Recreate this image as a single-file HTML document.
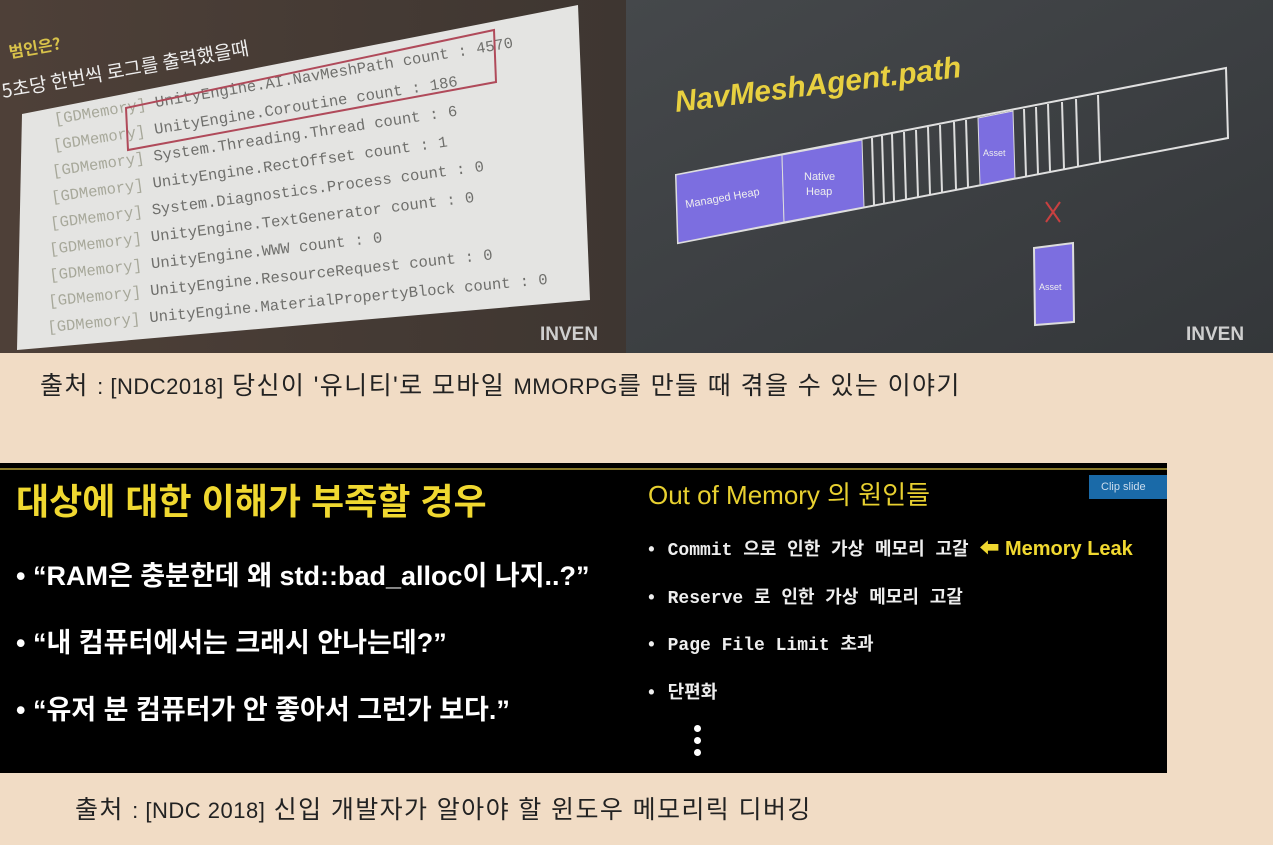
<!DOCTYPE html>
<html><head><meta charset="utf-8"><style>
body{margin:0;width:1273px;height:845px;background:#f1dcc5;position:relative;overflow:hidden;font-family:"Liberation Sans","Noto Sans CJK KR",sans-serif}
.cap{position:absolute;font-size:25px;color:#222;white-space:nowrap;letter-spacing:1.4px}
.cap .l{font-weight:300;font-size:22px;letter-spacing:0.5px}
</style></head><body>
<svg style="position:absolute;left:0;top:0" width="626" height="353">
<defs><linearGradient id="g1" x1="0" x2="1"><stop offset="0" stop-color="#4e4038"/><stop offset="1" stop-color="#3e3631"/></linearGradient></defs>
<rect width="626" height="353" fill="url(#g1)"/>
<polygon points="22,114 578,5 590,300 17,350" fill="#e4e4e2"/>
<text x="10" y="58" transform="rotate(-10 10 58)" font-family="Noto Sans CJK KR,sans-serif" font-size="16" fill="#d8c24a" font-weight="bold">범인은?</text>
<text x="3" y="98" transform="rotate(-10 3 98)" font-family="Noto Sans CJK KR,sans-serif" font-size="19" fill="#eee">5초당 한번씩 로그를 출력했을때</text>
<g font-family="Liberation Mono,monospace" font-size="15.5" fill="#6f6f6c">
<text x="55" y="124" transform="rotate(-9.5 55 124)"><tspan fill="#a7a89a">[GDMemory]</tspan> UnityEngine.AI.NavMeshPath count : 4570</text>
<text x="54" y="150" transform="rotate(-9 54 150)"><tspan fill="#a7a89a">[GDMemory]</tspan> UnityEngine.Coroutine count : 186</text>
<text x="53" y="176" transform="rotate(-8.5 53 176)"><tspan fill="#a7a89a">[GDMemory]</tspan> System.Threading.Thread count : 6</text>
<text x="52" y="202" transform="rotate(-8 52 202)"><tspan fill="#a7a89a">[GDMemory]</tspan> UnityEngine.RectOffset count : 1</text>
<text x="51" y="228" transform="rotate(-7.5 51 228)"><tspan fill="#a7a89a">[GDMemory]</tspan> System.Diagnostics.Process count : 0</text>
<text x="50" y="254" transform="rotate(-7 50 254)"><tspan fill="#a7a89a">[GDMemory]</tspan> UnityEngine.TextGenerator count : 0</text>
<text x="50" y="280" transform="rotate(-6.5 50 280)"><tspan fill="#a7a89a">[GDMemory]</tspan> UnityEngine.WWW count : 0</text>
<text x="49" y="306" transform="rotate(-6 49 306)"><tspan fill="#a7a89a">[GDMemory]</tspan> UnityEngine.ResourceRequest count : 0</text>
<text x="48" y="332" transform="rotate(-5.5 48 332)"><tspan fill="#a7a89a">[GDMemory]</tspan> UnityEngine.MaterialPropertyBlock count : 0</text>
</g>
<polygon points="126,108 494,30 496,82 128,150" fill="none" stroke="#b04a5a" stroke-width="2"/>
<text x="540" y="340" font-family="Liberation Sans,sans-serif" font-weight="bold" font-size="19" fill="#cfcfcf">INVEN</text>
</svg>
<svg style="position:absolute;left:626px;top:0" width="647" height="353">
<defs><linearGradient id="g2" x1="0" y1="0" x2="1" y2="1"><stop offset="0" stop-color="#45484b"/><stop offset="1" stop-color="#34373a"/></linearGradient></defs>
<rect width="647" height="353" fill="url(#g2)"/>
<text x="50" y="112" transform="rotate(-7 50 112)" font-family="Liberation Sans,sans-serif" font-style="italic" font-weight="bold" font-size="30" fill="#e8d040">NavMeshAgent.path</text>
<polygon points="50,175 600,68 602,138 52,243" fill="none" stroke="#e0e0e0" stroke-width="2"/>
<polygon points="50,175 156,155 158,222 52,243" fill="#7c6ee0" stroke="#ddd"/>
<polygon points="156,155 236,140 238,207 158,222" fill="#7c6ee0" stroke="#ddd"/>
<polygon points="352,118 387,111 389,178 354,185" fill="#7c6ee0" stroke="#ddd"/>
<g stroke="#ddd" stroke-width="2">
<line x1="246" y1="138" x2="248" y2="205"/><line x1="256" y1="136" x2="258" y2="203"/><line x1="266" y1="134" x2="268" y2="201"/><line x1="278" y1="132" x2="280" y2="199"/><line x1="290" y1="130" x2="292" y2="197"/><line x1="302" y1="127" x2="304" y2="194"/><line x1="314" y1="125" x2="316" y2="192"/><line x1="328" y1="122" x2="330" y2="189"/><line x1="340" y1="120" x2="342" y2="187"/>
<line x1="398" y1="109" x2="400" y2="176"/><line x1="410" y1="107" x2="412" y2="174"/><line x1="422" y1="104" x2="424" y2="171"/><line x1="436" y1="102" x2="438" y2="169"/><line x1="450" y1="99" x2="452" y2="166"/><line x1="472" y1="95" x2="474" y2="162"/>
</g>
<g stroke="#c84040" stroke-width="2"><line x1="420" y1="202" x2="434" y2="222"/><line x1="434" y1="202" x2="420" y2="222"/></g>
<polygon points="408,248 447,243 448,322 409,325" fill="#7c6ee0" stroke="#ddd" stroke-width="2"/>
<g font-size="11" fill="#eee" font-family="Liberation Sans,sans-serif"><text x="60" y="208" transform="rotate(-10 60 208)">Managed Heap</text><text x="178" y="180">Native</text><text x="180" y="195">Heap</text><text x="357" y="156" font-size="9">Asset</text><text x="413" y="290" font-size="9">Asset</text></g>
<text x="560" y="340" font-family="Liberation Sans,sans-serif" font-weight="bold" font-size="19" fill="#cfcfcf">INVEN</text>
</svg>
<div class="cap" style="left:40px;top:366px">출처 <span class="l">: [NDC2018]</span> 당신이 '유니티'로 모바일 <span class="l">MMORPG</span>를 만들 때 겪을 수 있는 이야기</div>
<div style="position:absolute;left:0;top:463px;width:1167px;height:310px;background:#000">
<div style="position:absolute;left:0;top:5px;width:1167px;height:2px;background:#8a7a2a"></div>
<div style="position:absolute;left:16px;top:10px;font-size:36px;font-weight:bold;color:#f0d830;letter-spacing:0">대상에 대한 이해가 부족할 경우</div>
<div style="position:absolute;left:16px;top:80px;font-size:27px;color:#fff;line-height:67px;font-weight:bold">• “RAM은 충분한데 왜 std::bad_alloc이 나지..?”<br>• “내 컴퓨터에서는 크래시 안나는데?”<br>• “유저 분 컴퓨터가 안 좋아서 그런가 보다.”</div>
<div style="position:absolute;left:648px;top:12px;font-size:26px;color:#e8d030">Out of Memory 의 원인들</div>
<div style="position:absolute;left:1089px;top:12px;width:78px;height:24px;background:#1a6aa8;color:#cde;font-size:11px;line-height:24px;padding-left:12px;box-sizing:border-box">Clip slide</div>
<div style="position:absolute;left:646px;top:63px;font-family:'Liberation Mono','Noto Sans CJK KR',monospace;font-weight:bold;font-size:18px;color:#eee;line-height:47.5px;letter-spacing:0">• Commit 으로 인한 가상 메모리 고갈 <span style="color:#f0d830;font-family:'Liberation Sans','Noto Sans CJK KR',sans-serif;font-size:20px;letter-spacing:0">⬅ Memory Leak</span><br>• Reserve 로 인한 가상 메모리 고갈<br>• Page File Limit 초과<br>• 단편화</div>
<div style="position:absolute;left:694px;top:262px;width:7px;height:7px;border-radius:50%;background:#fff;box-shadow:0 12px 0 #fff,0 24px 0 #fff"></div>
</div>
<div class="cap" style="left:75px;top:790px">출처 <span class="l">: [NDC 2018]</span> 신입 개발자가 알아야 할 윈도우 메모리릭 디버깅</div>
</body></html>
